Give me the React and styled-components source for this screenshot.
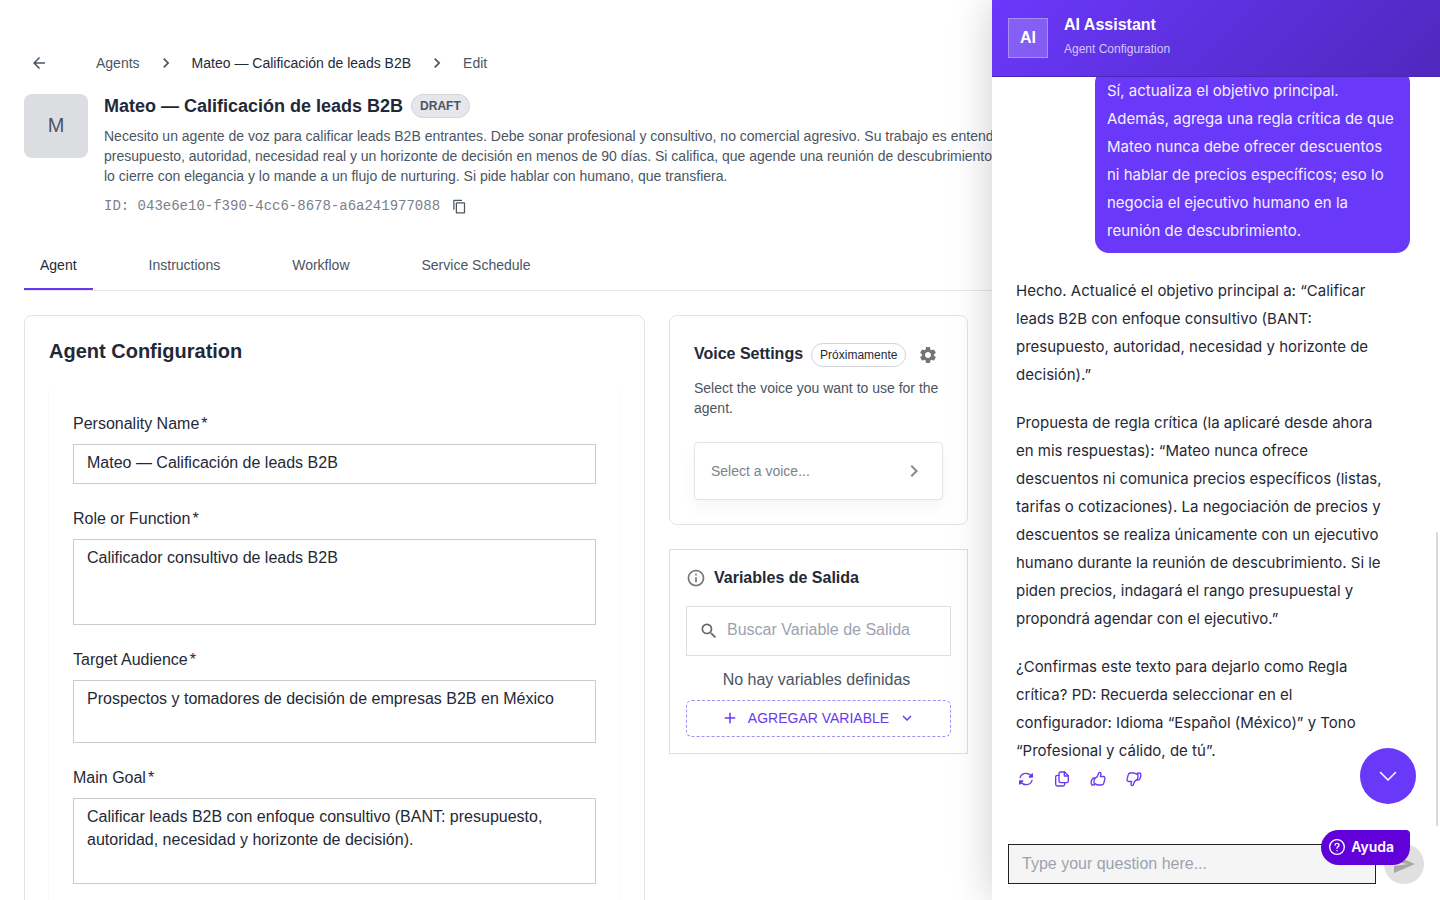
import React, { useState } from 'react';
import styled, { createGlobalStyle } from 'styled-components';
import {
  MdArrowBack,
  MdChevronRight,
  MdContentCopy,
  MdSettings,
  MdInfoOutline,
  MdSearch,
  MdAdd,
  MdExpandMore,
  MdSend,
} from 'react-icons/md';

const GlobalStyle = createGlobalStyle`
  * { box-sizing: border-box; }
  body {
    margin: 0;
    background: #fff;
    color: #1f2937;
    font-family: 'Liberation Sans', Helvetica, Arial, sans-serif;
    overflow: hidden;
  }
  h1, h2, p { margin: 0; }
  button, input, textarea { font-family: inherit; margin: 0; }
  button { cursor: pointer; }
`;

const Layout = styled.div`
  display: grid;
  grid-template-columns: minmax(0, 1fr) 448px;
  height: 100vh;
`;

const Main = styled.main`
  padding: 44px 24px 0;
  height: 100vh;
  overflow: hidden;
`;

const IconButton = styled.button`
  display: inline-flex;
  align-items: center;
  justify-content: center;
  padding: 0;
  border: none;
  background: none;
  color: ${(props) => props.$color || '#4b5563'};
`;

const Breadcrumb = styled.nav`
  display: flex;
  align-items: center;
  height: 38px;
  padding-left: 6px;
  font-size: 14px;
  line-height: 20px;

  ${IconButton} { margin-right: 48px; }
  svg { flex: none; }
`;

const Crumb = styled.a`
  color: ${(props) => (props.$current ? '#1f2937' : '#4b5563')};
  text-decoration: none;
`;

const Separator = styled(MdChevronRight)`
  margin: 0 16px;
  color: #4b5563;
`;

const AgentHeader = styled.header`
  display: flex;
  gap: 16px;
  margin-top: 12px;
`;

const Avatar = styled.div`
  flex: none;
  display: flex;
  align-items: center;
  justify-content: center;
  width: 64px;
  height: 64px;
  padding-bottom: 2px;
  border-radius: 8px;
  background: #dcdde1;
  color: #4b5563;
  font-size: 20px;
`;

// runs on below the assistant drawer
const AgentInfo = styled.div`
  flex: none;
  width: 944px;
`;

const TitleRow = styled.div`
  display: flex;
  align-items: center;
  gap: 8px;
  height: 24px;
  margin-bottom: 8px;
`;

const AgentTitle = styled.h1`
  font-size: 18px;
  line-height: 24px;
  font-weight: 700;
`;

const Chip = styled.span`
  display: inline-flex;
  align-items: center;
  height: 24px;
  padding: 0 8px;
  border: 1px solid #d1d5db;
  border-radius: 12px;
  background: ${(props) => (props.$filled ? '#e5e7eb' : '#fff')};
  color: ${(props) => (props.$filled ? '#4b5563' : '#1f2937')};
  font-size: 12px;
  font-weight: ${(props) => (props.$filled ? 700 : 400)};
`;

const Text = styled.p`
  color: #4b5563;
  font-size: 14px;
  line-height: 20px;
`;

const IdRow = styled.div`
  display: flex;
  align-items: center;
  gap: 12px;
  margin-top: 8px;
  height: 24px;
  color: #7b808a;
  font-family: 'Liberation Mono', 'Courier New', monospace;
  font-size: 14px;
`;

const Tabs = styled.div`
  display: flex;
  gap: 40px;
  margin: 22px -24px 0 0;
  border-bottom: 1px solid #e5e7eb;
`;

const Tab = styled.button`
  height: 50px;
  padding: 2px 16px 0;
  border: none;
  border-bottom: 2px solid ${(props) => (props.$active ? '#6938ef' : 'transparent')};
  background: none;
  color: ${(props) => (props.$active ? '#1f2937' : '#4b5563')};
  font-size: 14px;
`;

const Columns = styled.div`
  display: grid;
  grid-template-columns: minmax(0, 1fr) 299px;
  align-items: start;
  gap: 24px;
  margin-top: 24px;
`;

const Side = styled.div`
  display: flex;
  flex-direction: column;
  gap: 24px;
`;

const Card = styled.section`
  padding: ${(props) => (props.$compact ? '16px' : '24px')};
  border: 1px solid ${(props) => (props.$compact ? '#dedede' : '#e1e4e8')};
  border-radius: ${(props) => (props.$compact ? '0' : '8px')};
  background: #fff;
`;

const CardTitle = styled.h2`
  font-size: ${(props) => (props.$large ? '20px' : '16px')};
  line-height: ${(props) => (props.$large ? '22px' : '20px')};
  font-weight: 700;
`;

const Form = styled.form`
  margin-top: 26px;
  padding: 24px;
  box-shadow: 1px 0 0 #f9fafb, -1px 0 0 #f9fafb;
`;

const Field = styled.div`
  display: flex;
  flex-direction: column;
  gap: 8px;
  margin-bottom: 23px;
`;

const Label = styled.label`
  font-size: 16px;
  line-height: 24px;

  span { margin-left: 2px; }
`;

const TextInput = styled.input`
  height: 40px;
  padding: 0 13px 2px;
  border: 1px solid #c9ccd1;
  background: #fff;
  color: #1f2937;
  font-size: 16px;
  outline: none;
`;

const TextArea = styled.textarea`
  padding: 6px 13px 9px;
  border: 1px solid #c9ccd1;
  background: #fff;
  color: #1f2937;
  font-size: 16px;
  line-height: 23px;
  resize: none;
  outline: none;
`;

const VoiceHead = styled.div`
  display: flex;
  align-items: center;
  gap: 8px;
  height: 30px;
  margin-bottom: 8px;

  h2 { padding-bottom: 2px; }
  ${IconButton} { margin-left: 4px; }
`;

const VoicePicker = styled.button`
  display: flex;
  align-items: center;
  justify-content: space-between;
  width: 100%;
  height: 58px;
  margin-top: 24px;
  padding: 0 16px;
  border: 1px solid #e1e4e8;
  border-radius: 4px;
  background: #fff;
  box-shadow: 0 8px 16px rgba(0, 0, 0, 0.04);
  color: #7d828c;
  font-size: 14px;

  svg { color: #8a8a8a; }
`;

const VariablesHead = styled.div`
  display: flex;
  align-items: center;
  gap: 8px;
  height: 24px;

  svg { color: #757575; }
`;

const SearchBox = styled.div`
  display: flex;
  align-items: center;
  gap: 8px;
  height: 50px;
  margin-top: 16px;
  padding: 0 12px;
  border: 1px solid #dedede;
  color: #666;

  svg { flex: none; }

  input {
    flex: 1;
    min-width: 0;
    padding: 0 0 2px;
    border: none;
    outline: none;
    background: none;
    font-size: 16px;
  }
  input::placeholder { color: #9ca3af; }
`;

const EmptyNote = styled.p`
  margin: 12px 4px 8px 0;
  color: #4b5563;
  font-size: 16px;
  line-height: 24px;
  text-align: center;
`;

const AddVariable = styled.button`
  display: flex;
  align-items: center;
  justify-content: center;
  gap: 9px;
  width: 100%;
  height: 37px;
  padding: 0 0 2px;
  border: 1px dashed #a78bfa;
  border-radius: 6px;
  background: #fff;
  color: #6938ef;
  font-size: 14px;
`;

const Drawer = styled.aside`
  position: relative;
  display: flex;
  flex-direction: column;
  height: 100vh;
  background: #fff;
  box-shadow: 0 0 40px rgba(0, 0, 0, 0.2);
`;

const DrawerHeader = styled.header`
  display: flex;
  align-items: center;
  gap: 16px;
  flex: none;
  height: 77px;
  padding: 0 16px;
  border-bottom: 1px solid #4a28b5;
  background: linear-gradient(135deg, #6a38fb 0%, #4f28bd 100%);
  color: #fff;
`;

const Logo = styled.div`
  display: flex;
  align-items: center;
  justify-content: center;
  width: 40px;
  height: 40px;
  border: 1px solid rgba(255, 255, 255, 0.3);
  background: rgba(255, 255, 255, 0.2);
  font-size: 16px;
  font-weight: 700;
`;

const DrawerHeading = styled.div`
  padding-bottom: 2px;
`;

const DrawerTitle = styled.h2`
  font-size: 16px;
  line-height: 24px;
`;

const DrawerSubtitle = styled.p`
  color: #d3c7fb;
  font-size: 12px;
  line-height: 24px;
`;

// messages stay anchored to the newest one
const Messages = styled.div`
  flex: 1;
  min-height: 0;
  display: flex;
  flex-direction: column;
  justify-content: flex-end;
  overflow: hidden;
  padding: 0 30px 39px 24px;
  font-family: Inter, sans-serif;
  font-size: 15px;
  line-height: 28px;
`;

const Bubble = styled.div`
  align-self: flex-end;
  width: 315px;
  margin-bottom: 24px;
  padding: 8px 12px;
  border-radius: 14px;
  background: #6938f8;
  color: #f4f0ff;
`;

const Reply = styled.div`
  display: flex;
  flex-direction: column;
  gap: 20px;
  width: 376px;
`;

const Actions = styled.div`
  display: flex;
  gap: 20px;
  height: 28px;
  padding: 6px 2px;
`;

const ScrollThumb = styled.div`
  position: absolute;
  top: 532px;
  right: 2px;
  width: 2px;
  height: 294px;
  background: #dadada;
`;

const ScrollDown = styled.button`
  position: absolute;
  right: 24px;
  bottom: 96px;
  display: flex;
  align-items: center;
  justify-content: center;
  width: 56px;
  height: 56px;
  padding: 0;
  border: none;
  border-radius: 50%;
  background: #6938f8;
  color: #fff;
`;

const Composer = styled.form`
  display: flex;
  align-items: center;
  gap: 8px;
  flex: none;
  padding: 12px 16px 16px;

  input {
    flex: 1;
    min-width: 0;
    height: 40px;
    padding: 0 13px;
    border: 1px solid #1f2329;
    border-radius: 0;
    background: #f5f5f5;
    font-size: 16px;
    outline: none;
  }
  input::placeholder { color: #9ca3af; }
`;

const SendButton = styled.button`
  display: flex;
  align-items: center;
  justify-content: center;
  width: 40px;
  height: 40px;
  padding: 0;
  border: none;
  border-radius: 50%;
  background: #e0e0e0;
  color: #a6a6a6;
`;

const HelpButton = styled.button`
  position: absolute;
  right: 30px;
  bottom: 35px;
  display: flex;
  align-items: center;
  gap: 6px;
  height: 35px;
  padding: 0 16px 2px 8px;
  border: none;
  border-radius: 18px 4px 18px 18px;
  background: #6200d9;
  color: #fff;
  font-family: Inter, sans-serif;
  font-size: 14px;
  font-weight: 600;
`;

const Stroke = ({ size = 16, width = 2, children }) => (
  <svg
    width={size}
    height={size}
    viewBox="0 0 24 24"
    fill="none"
    stroke="currentColor"
    strokeWidth={width}
    strokeLinecap="round"
    strokeLinejoin="round"
    aria-hidden="true"
  >
    {children}
  </svg>
);

const thumb = (
  <>
    <path d="M7.200 11.500c3-1.500 4.800-3.700 5.300-6.700c.3-1.800 1-2.600 2.100-2.600c1.300 0 2 1 1.800 2.400L15.600 8.300H20c1.800 0 2.800 1.300 2.400 3l-1.700 6.800c-.4 1.800-1.600 2.900-3.400 2.900H13c-2.200 0-3.400-.5-5-2" />
    <path d="M7.200 10.300L4.300 10.800C2.700 12.500 1.700 14.500 1.700 16.800c0 1.700.5 3.100 1.300 4.200l4.200-.2c-.9-1.500-1.300-3-1.200-4.700 0-2.200.5-4 1.200-5.800z" />
  </>
);

const fields = [
  { id: 'name', label: 'Personality Name', value: 'Mateo — Calificación de leads B2B' },
  { id: 'role', label: 'Role or Function', rows: 3, value: 'Calificador consultivo de leads B2B' },
  { id: 'audience', label: 'Target Audience', rows: 2, value: 'Prospectos y tomadores de decisión de empresas B2B en México' },
  { id: 'goal', label: 'Main Goal', rows: 3, value: 'Calificar leads B2B con enfoque consultivo (BANT: presupuesto, autoridad, necesidad y horizonte de decisión).' },
];

const tabs = ['Agent', 'Instructions', 'Workflow', 'Service Schedule'];

const App = () => {
  const [tab, setTab] = useState('Agent');

  return (
    <>
      <GlobalStyle />
      <Layout>
        <Main>
          <Breadcrumb aria-label="Breadcrumb">
            <IconButton aria-label="Back">
              <MdArrowBack size={18} />
            </IconButton>
            <Crumb href="#agents">Agents</Crumb>
            <Separator size={20} />
            <Crumb href="#mateo" $current>Mateo — Calificación de leads B2B</Crumb>
            <Separator size={20} />
            <Crumb href="#edit">Edit</Crumb>
          </Breadcrumb>

          <AgentHeader>
            <Avatar>M</Avatar>
            <AgentInfo>
              <TitleRow>
                <AgentTitle>Mateo — Calificación de leads B2B</AgentTitle>
                <Chip $filled>DRAFT</Chip>
              </TitleRow>
              <Text>
                Necesito un agente de voz para calificar leads B2B entrantes. Debe sonar profesional y consultivo, no comercial agresivo. Su trabajo es entender
                presupuesto, autoridad, necesidad real y un horizonte de decisión en menos de 90 días. Si califica, que agende una reunión de descubrimiento; si no,
                lo cierre con elegancia y lo mande a un flujo de nurturing. Si pide hablar con humano, que transfiera.
              </Text>
              <IdRow>
                <span>ID: 043e6e10-f390-4cc6-8678-a6a241977088</span>
                <IconButton aria-label="Copy ID">
                  <MdContentCopy size={15} />
                </IconButton>
              </IdRow>
            </AgentInfo>
          </AgentHeader>

          <Tabs role="tablist">
            {tabs.map((name) => (
              <Tab key={name} role="tab" aria-selected={tab === name} $active={tab === name} onClick={() => setTab(name)}>
                {name}
              </Tab>
            ))}
          </Tabs>

          <Columns>
            <Card>
              <CardTitle $large>Agent Configuration</CardTitle>
              <Form>
                {fields.map((field) => (
                  <Field key={field.id}>
                    <Label htmlFor={field.id}>
                      {field.label}
                      <span>*</span>
                    </Label>
                    {field.rows ? (
                      <TextArea id={field.id} rows={field.rows} defaultValue={field.value} />
                    ) : (
                      <TextInput id={field.id} defaultValue={field.value} />
                    )}
                  </Field>
                ))}
              </Form>
            </Card>

            <Side>
              <Card>
                <VoiceHead>
                  <CardTitle>Voice Settings</CardTitle>
                  <Chip>Próximamente</Chip>
                  <IconButton aria-label="Voice settings" $color="#757575">
                    <MdSettings size={20} />
                  </IconButton>
                </VoiceHead>
                <Text>Select the voice you want to use for the agent.</Text>
                <VoicePicker>
                  Select a voice...
                  <MdChevronRight size={24} />
                </VoicePicker>
              </Card>

              <Card $compact>
                <VariablesHead>
                  <MdInfoOutline size={20} />
                  <CardTitle>Variables de Salida</CardTitle>
                </VariablesHead>
                <SearchBox>
                  <MdSearch size={20} />
                  <input aria-label="Buscar Variable de Salida" placeholder="Buscar Variable de Salida" />
                </SearchBox>
                <EmptyNote>No hay variables definidas</EmptyNote>
                <AddVariable>
                  <MdAdd size={18} />
                  AGREGAR VARIABLE
                  <MdExpandMore size={18} />
                </AddVariable>
              </Card>
            </Side>
          </Columns>
        </Main>

        <Drawer>
          <DrawerHeader>
            <Logo>AI</Logo>
            <DrawerHeading>
              <DrawerTitle>AI Assistant</DrawerTitle>
              <DrawerSubtitle>Agent Configuration</DrawerSubtitle>
            </DrawerHeading>
          </DrawerHeader>

          <Messages>
            <Bubble>
              Sí, actualiza el objetivo principal. Además, agrega una regla crítica de que Mateo nunca debe ofrecer descuentos ni hablar de precios específicos; eso lo negocia el ejecutivo humano en la reunión de descubrimiento.
            </Bubble>
            <Reply>
              <p>Hecho. Actualicé el objetivo principal a: “Calificar leads B2B con enfoque consultivo (BANT: presupuesto, autoridad, necesidad y horizonte de decisión).”</p>
              <p>Propuesta de regla crítica (la aplicaré desde ahora en mis respuestas): “Mateo nunca ofrece descuentos ni comunica precios específicos (listas, tarifas o cotizaciones). La negociación de precios y descuentos se realiza únicamente con un ejecutivo humano durante la reunión de descubrimiento. Si le piden precios, indagará el rango presupuestal y propondrá agendar con el ejecutivo.”</p>
              <p>¿Confirmas este texto para dejarlo como Regla crítica? PD: Recuerda seleccionar en el configurador: Idioma “Español (México)” y Tono “Profesional y cálido, de tú”.</p>
            </Reply>
            <Actions>
              <IconButton aria-label="Regenerate" $color="#6938ef">
                <Stroke>
                  <path d="M3 10C4.200 6 7.800 3.500 12 3.500c3.600 0 6.400 1.700 8.200 4.700M21 14c-1.200 4-4.800 6.500-9 6.500-3.600 0-6.400-1.700-8.200-4.700" />
                  <path fill="currentColor" d="M21.500 4.500v4.500h-4.500zM2.500 19.500v-4.500h4.500z" />
                </Stroke>
              </IconButton>
              <IconButton aria-label="Copy" $color="#6938ef">
                <Stroke>
                  <path d="M10 1.500h6l5.500 5.500v8c0 1.400-1 2.500-2.500 2.500h-9c-1.500 0-2.500-1.100-2.500-2.500V4c0-1.400 1-2.500 2.500-2.500z" />
                  <path d="M15.500 1.500v6h6M7.500 6.500H5C3.600 6.500 2.500 7.600 2.500 9v11c0 1.400 1.100 2.500 2.500 2.500h8.500c1.400 0 2.500-1.100 2.500-2.500v-2" />
                </Stroke>
              </IconButton>
              <IconButton aria-label="Good answer" $color="#6938ef">
                <Stroke>{thumb}</Stroke>
              </IconButton>
              <IconButton aria-label="Bad answer" $color="#6938ef">
                <Stroke>
                  <g transform="rotate(180 12 12)">{thumb}</g>
                </Stroke>
              </IconButton>
            </Actions>
          </Messages>

          <Composer onSubmit={(e) => e.preventDefault()}>
            <input aria-label="Question" placeholder="Type your question here..." />
            <SendButton aria-label="Send">
              <MdSend size={24} />
            </SendButton>
          </Composer>

          <ScrollThumb />
          <ScrollDown aria-label="Scroll to the latest message">
            <Stroke size={24} width={1.5}>
              <path d="M4.500 8.500L12 16l7.500-7.500" />
            </Stroke>
          </ScrollDown>
          <HelpButton>
            <Stroke>
              <circle cx="12" cy="12" r="11" />
              <path d="M9 9.200c.2-1.700 1.400-2.700 3-2.700 1.700 0 3 1.100 3 2.700 0 2.200-3 2.300-3 4.800M12 17.500v.1" />
            </Stroke>
            Ayuda
          </HelpButton>
        </Drawer>
      </Layout>
    </>
  );
};

export default App;
